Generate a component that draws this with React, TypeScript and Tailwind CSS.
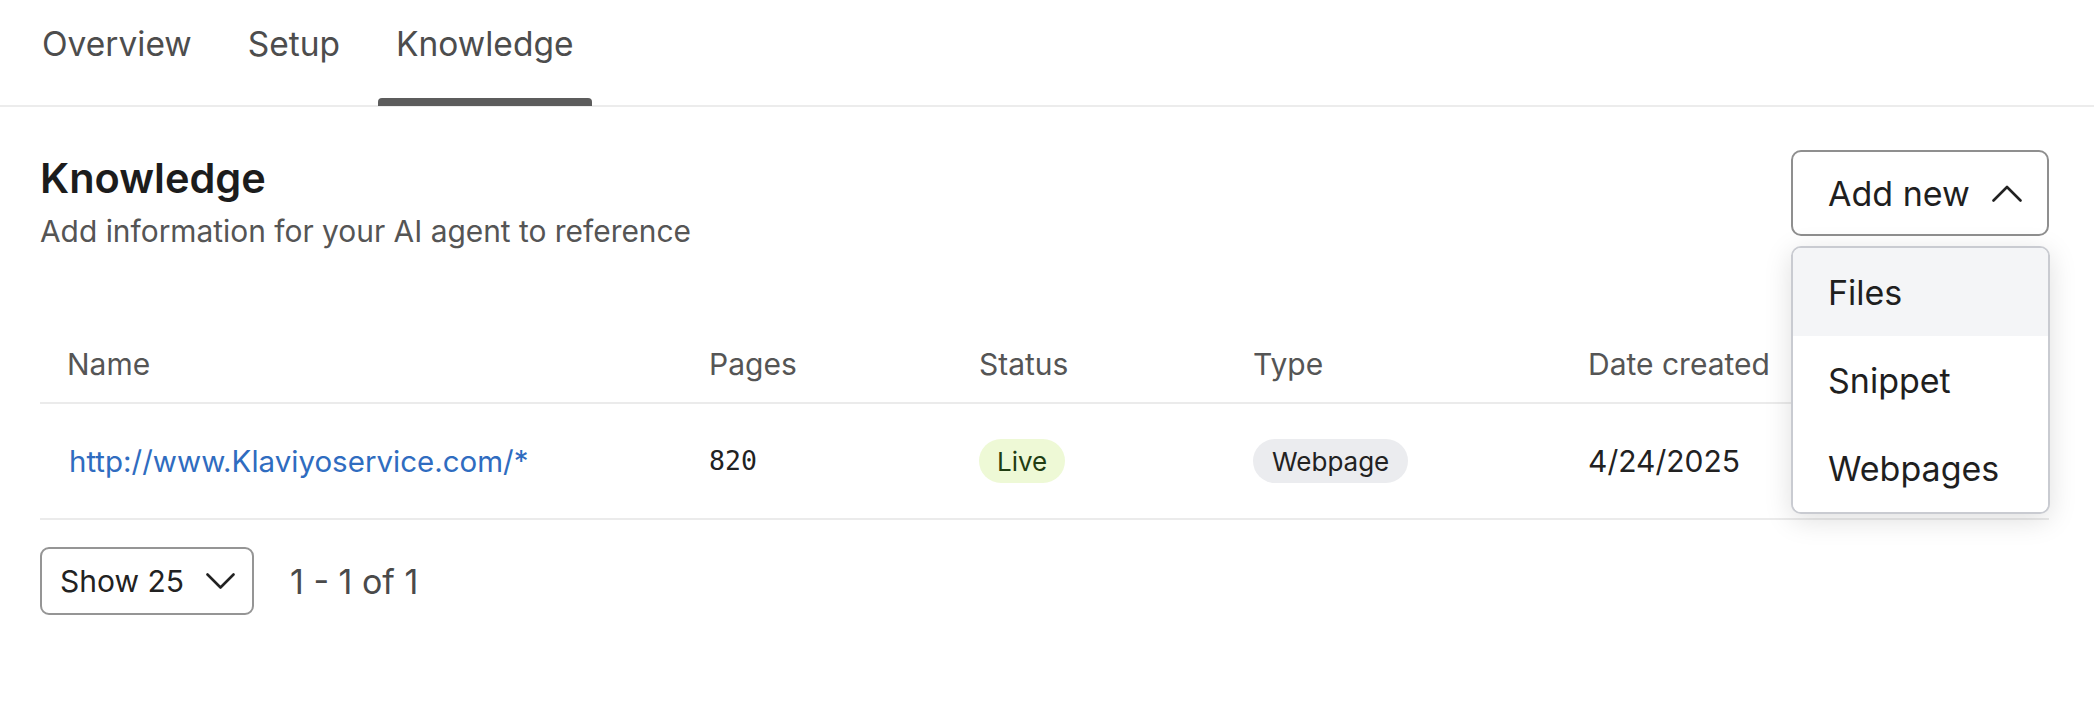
import { useState } from 'react';

const tabs = ['Overview', 'Setup', 'Knowledge'];

const rows = [
  {
    name: 'http://www.Klaviyoservice.com/*',
    pages: '820',
    status: 'Live',
    type: 'Webpage',
    created: '4/24/2025',
  },
];

const menuItems = ['Files', 'Snippet', 'Webpages'];

const ChevronUp = () => (
  <svg width="30" height="17" viewBox="0 0 30 17" fill="none">
    <polyline points="1.5,15.5 15,2 28.5,15.5" stroke="#222" strokeWidth="2.6" strokeLinecap="round" strokeLinejoin="round" />
  </svg>
);

const ChevronDown = () => (
  <svg width="29" height="17" viewBox="0 0 29 17" fill="none">
    <polyline points="1.5,1.5 14.5,14.5 27.5,1.5" stroke="#222" strokeWidth="2.6" strokeLinecap="round" strokeLinejoin="round" />
  </svg>
);

export default function App() {
  const [active, setActive] = useState('Knowledge');

  return (
    <div className="min-h-screen bg-white text-[#222] font-['Inter',sans-serif]">
      {/* tabs */}
      <div className="flex gap-[20px] pl-6 border-b-2 border-[#ececec]">
        {tabs.map((t) => (
          <button
            key={t}
            onClick={() => setActive(t)}
            className="relative px-[18px] pt-[20px] pb-[37px] text-[33.5px] leading-[48px] text-[#4d4d4d]"
          >
            {t}
            {active === t && (
              <span className="absolute left-0 right-0 bottom-[-1px] h-[8px] rounded-t-[4px] bg-[#5c5c5c]" />
            )}
          </button>
        ))}
      </div>

      <div className="pl-[40px] pr-[45px]">
        {/* heading */}
        <div className="flex items-start justify-between pt-[43px]">
          <div className="pt-[2px]">
            <h1 className="text-[41.5px] leading-[52px] font-semibold text-[#1c1c1c]">Knowledge</h1>
            <p className="mt-[7px] text-[29.9px] leading-[40px] text-[#555]">
              Add information for your AI agent to reference
            </p>
          </div>
          <div className="relative">
            <button className="flex items-center gap-[22px] h-[86px] w-[258px] pl-[35px] rounded-[10px] border-2 border-[#8f8f8f] text-[34px] text-[#1f1f1f]">
              Add new
              <ChevronUp />
            </button>
            <div className="absolute top-[96px] left-0 w-[259px] z-10 overflow-hidden rounded-[10px] border-2 border-[#c9cbd1] bg-white shadow-[0_6px_28px_rgba(0,0,0,0.13)]">
              {menuItems.map((m, i) => (
                <div
                  key={m}
                  className={
                    'flex items-center h-[88px] pl-[35px] text-[34px] text-[#1f1f1f] ' +
                    (i === 0 ? 'bg-[#f4f5f7]' : 'bg-white')
                  }
                >
                  {m}
                </div>
              ))}
            </div>
          </div>
        </div>

        {/* table */}
        <div className="mt-[75px]">
          <div className="grid grid-cols-[669px_270px_274px_335px_1fr] items-center h-[78px] border-b-2 border-[#ebebeb] text-[30px] text-[#555]">
            <div className="pl-[27px]">Name</div>
            <div>Pages</div>
            <div>Status</div>
            <div>Type</div>
            <div>Date created</div>
          </div>
          {rows.map((r) => (
            <div
              key={r.name}
              className="grid grid-cols-[669px_270px_274px_335px_1fr] items-center h-[116px] border-b-2 border-[#ebebeb]"
            >
              <div className="pl-[29px]">
                <a href="#" className="text-[29.5px] text-[#2f6cc0]">
                  {r.name}
                </a>
              </div>
              <div className="font-['DejaVu_Sans_Mono',monospace] text-[26.5px] text-[#222]">{r.pages}</div>
              <div>
                <span className="inline-flex items-center h-[44px] px-[18px] rounded-full bg-[#eef9d6] text-[26px] text-[#213d12]">
                  {r.status}
                </span>
              </div>
              <div>
                <span className="inline-flex items-center h-[44px] px-[19px] rounded-full bg-[#ebecef] text-[26px] text-[#222]">
                  {r.type}
                </span>
              </div>
              <div className="text-[30px] text-[#222]">{r.created}</div>
            </div>
          ))}
        </div>

        {/* pagination */}
        <div className="flex items-center gap-[36px] mt-[27px]">
          <button className="flex items-center gap-[22px] h-[68px] w-[214px] pl-[18px] rounded-[9px] border-2 border-[#959595] text-[30px] text-[#222]">
            Show 25
            <ChevronDown />
          </button>
          <span className="text-[34px] text-[#4a4a4a]">1 - 1 of 1</span>
        </div>
      </div>
    </div>
  );
}
